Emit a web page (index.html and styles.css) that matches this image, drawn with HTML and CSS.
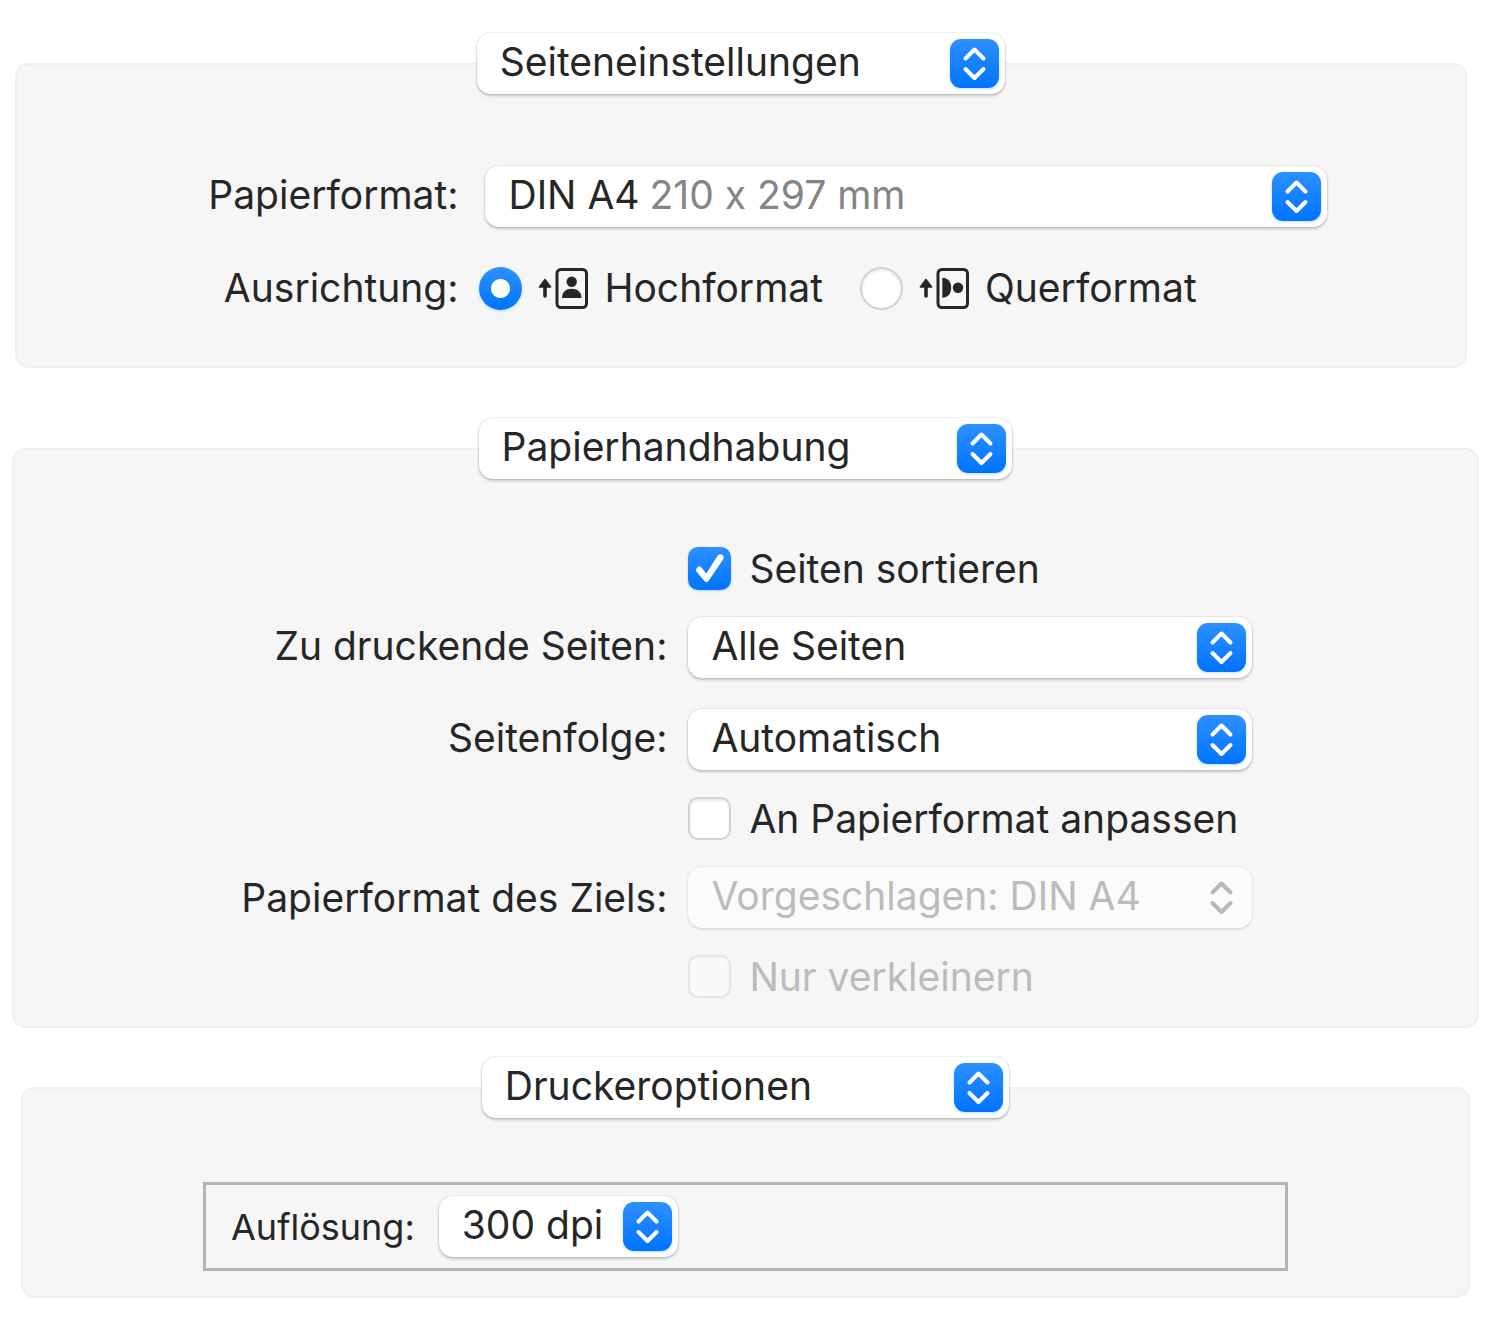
FILE: index.html
```html
<!DOCTYPE html>
<html lang="de">
<head>
<meta charset="utf-8">
<meta name="viewport" content="width=device-width, initial-scale=1">
<title>Drucken</title>
<link rel="stylesheet" href="styles.css">
</head>
<body>
<svg class="sprite" aria-hidden="true">
  <symbol id="chevrons" viewBox="0 0 49 49">
    <path d="M15.5 19.5 24.5 10.5 33.5 19.5M15.5 30 24.5 39 33.5 30" fill="none" stroke="currentColor" stroke-width="4" stroke-linecap="round" stroke-linejoin="round"/>
  </symbol>
  <symbol id="arrow-up" viewBox="0 0 14 44">
    <path d="M7 13.5 12.6 21H1.4Z" fill="currentColor" stroke="currentColor" stroke-width="1.5" stroke-linejoin="round"/>
    <path d="M7 20V30" stroke="currentColor" stroke-width="3.6" stroke-linecap="round"/>
  </symbol>
</svg>
<main class="page">
  <fieldset class="panel panel-setup">
    <legend class="panel-title">
      <span class="popup">
        <select aria-label="Bereich"><option>Seiteneinstellungen</option></select>
        <svg class="popup-arrows" aria-hidden="true"><use href="#chevrons"/></svg>
      </span>
    </legend>
    <div class="form form-setup">
      <label class="name" for="paper">Papierformat:</label>
      <span class="popup popup-paper">
        <select id="paper"><option>DIN A4</option></select>
        <span class="paper-size">210 x 297 mm</span>
        <svg class="popup-arrows" aria-hidden="true"><use href="#chevrons"/></svg>
      </span>
      <span class="name name-plain" id="orientation">Ausrichtung:</span>
      <div class="choices" role="radiogroup" aria-labelledby="orientation">
        <label class="choice">
          <input type="radio" name="orientation" checked>
          <svg class="orient" viewBox="0 0 50 44" aria-hidden="true">
            <use href="#arrow-up" width="14" height="44"/>
            <rect x="19" y="3.5" width="29.5" height="38" rx="4" fill="none" stroke="currentColor" stroke-width="3"/>
            <circle cx="33.7" cy="15.7" r="5.2" fill="currentColor"/>
            <path d="M24 32C24 26 28 22.7 33.7 22.7S43.5 26 43.5 32Z" fill="currentColor"/>
          </svg>
          Hochformat
        </label>
        <label class="choice">
          <input type="radio" name="orientation">
          <svg class="orient" viewBox="0 0 50 44" aria-hidden="true">
            <use href="#arrow-up" width="14" height="44"/>
            <rect x="19" y="3.5" width="29.5" height="38" rx="4" fill="none" stroke="currentColor" stroke-width="3"/>
            <circle cx="39" cy="21.7" r="5.2" fill="currentColor"/>
            <path d="M23.3 11.7C29 11.7 32.2 16 32.2 21.7S29 31.7 23.3 31.7Z" fill="currentColor"/>
          </svg>
          Querformat
        </label>
      </div>
    </div>
  </fieldset>

  <fieldset class="panel panel-handling">
    <legend class="panel-title">
      <span class="popup">
        <select aria-label="Bereich"><option>Papierhandhabung</option></select>
        <svg class="popup-arrows" aria-hidden="true"><use href="#chevrons"/></svg>
      </span>
    </legend>
    <div class="form form-handling">
      <label class="choice tick"><input type="checkbox" checked>Seiten sortieren</label>
      <label class="name" for="pages">Zu druckende Seiten:</label>
      <span class="popup">
        <select id="pages"><option>Alle Seiten</option></select>
        <svg class="popup-arrows" aria-hidden="true"><use href="#chevrons"/></svg>
      </span>
      <label class="name name-plain" for="order">Seitenfolge:</label>
      <span class="popup popup-order">
        <select id="order"><option>Automatisch</option></select>
        <svg class="popup-arrows" aria-hidden="true"><use href="#chevrons"/></svg>
      </span>
      <label class="choice tick"><input type="checkbox">An Papierformat anpassen</label>
      <label class="name name-plain" for="target">Papierformat des Ziels:</label>
      <span class="popup popup-disabled">
        <select id="target" disabled><option>Vorgeschlagen: DIN A4</option></select>
        <svg class="popup-arrows" aria-hidden="true"><use href="#chevrons"/></svg>
      </span>
      <label class="choice tick tick-disabled"><input type="checkbox" disabled>Nur verkleinern</label>
    </div>
  </fieldset>

  <fieldset class="panel panel-options">
    <legend class="panel-title">
      <span class="popup">
        <select aria-label="Bereich"><option>Druckeroptionen</option></select>
        <svg class="popup-arrows" aria-hidden="true"><use href="#chevrons"/></svg>
      </span>
    </legend>
    <div class="resolution">
      <label class="resolution-name" for="dpi">Auflösung:</label>
      <span class="popup popup-dpi">
        <select id="dpi"><option>300 dpi</option></select>
        <svg class="popup-arrows" aria-hidden="true"><use href="#chevrons"/></svg>
      </span>
    </div>
  </fieldset>
</main>
</body>
</html>
```
FILE: styles.css
```css
* {
  box-sizing: border-box;
}

body {
  margin: 0;
  background: #fff;
  color: #262626;
  font: 39px/42px Inter, "Liberation Sans", sans-serif;
  font-feature-settings: "calt" 0;
}

.sprite {
  display: none;
}

.page {
  padding: 33px 0 19px;
}

/* Panels */
.panel {
  min-width: 0;
  margin: 0;
  padding: 0;
  border: 2px solid #f0f0f0;
  border-radius: 14px;
  background: #f6f6f6;
}

.panel-setup {
  margin: 0 33px 50px 15px;
}

.panel-handling {
  margin: 0 21px 29px 12px;
}

.panel-options {
  margin: 0 30px 0 21px;
}

.panel-title {
  width: 36.5%;
  margin: 0 auto;
  padding: 0;
}

/* Pop-up buttons: the parts share one grid cell */
.popup {
  display: grid;
  align-items: center;
  height: 61px;
}

.popup > * {
  grid-area: 1 / 1;
}

.popup select {
  width: 100%;
  height: 61px;
  margin: 0;
  padding: 0 60px 3px 23px;
  appearance: none;
  border: 0;
  border-radius: 14px;
  background: #fff;
  box-shadow: 0 0 2px rgba(0, 0, 0, 0.2), 0 2px 3px rgba(0, 0, 0, 0.2);
  color: inherit;
  font: inherit;
  line-height: 58px;
}

.popup-arrows {
  justify-self: end;
  width: 49px;
  height: 49px;
  margin-right: 6px;
  border-radius: 11px;
  background: linear-gradient(#2d90ff, #0074ff);
  box-shadow: 0 1px 3px rgba(0, 116, 255, 0.25);
  color: #fff;
  pointer-events: none;
}

.popup-disabled select {
  background: #fbfbfb;
  box-shadow: 0 0 2px rgba(0, 0, 0, 0.12), 0 2px 3px rgba(0, 0, 0, 0.08);
  color: #bbb;
  opacity: 1;
}

.popup-disabled .popup-arrows {
  background: none;
  box-shadow: none;
  color: #b8b8b8;
}

.popup-paper {
  margin-left: 6px;
}

.paper-size {
  padding: 0 0 3px 164px;
  color: #858585;
  pointer-events: none;
}

.popup-order {
  margin-top: 4px;
}

.popup-dpi {
  width: 239px;
}

/* Forms */
.form {
  display: grid;
  align-items: center;
  column-gap: 21px;
}

.form-setup {
  grid-template-columns: 441fr 847fr;
  row-gap: 39px;
  padding: 72px 9.5% 56px 0;
}

.form-handling {
  grid-template-columns: 653fr 563fr;
  row-gap: 27px;
  padding: 68px 15.4% 28px 0;
}

.name {
  padding-bottom: 4px;
  text-align: right;
  white-space: nowrap;
}

.name-plain {
  padding-bottom: 0;
}

.choices {
  display: flex;
  gap: 37px;
}

.choice {
  display: flex;
  align-items: center;
  gap: 16px;
  white-space: nowrap;
}

.tick {
  grid-column: 2;
  gap: 18px;
}

.tick-disabled {
  color: #bbb;
}

.choice input {
  flex: none;
  width: 43px;
  height: 43px;
  margin: 0;
  appearance: none;
  border: 2px solid #d2d2d2;
  border-radius: 10px;
  background: #fff;
  box-shadow: inset 0 2px 3px rgba(0, 0, 0, 0.08);
}

.choice input[type="radio"] {
  border-radius: 50%;
}

.choice input:checked {
  border: 0;
  background: linear-gradient(#2d90ff, #0074ff);
  box-shadow: 0 1px 3px rgba(0, 116, 255, 0.25);
}

.choice input[type="radio"]:checked {
  background: radial-gradient(circle, #fff 9px, transparent 10px), linear-gradient(#2d90ff, #0074ff);
}

.choice input[type="checkbox"]:checked {
  display: grid;
  place-items: center;
}

.choice input[type="checkbox"]:checked::before {
  content: "";
  width: 29px;
  height: 29px;
  background: #fff;
  clip-path: path("M2.5 13Q-0.5 15.500 1.500 18L9 27Q11.500 29.500 13.500 26.500L28 5Q29 2 26.500 0.500Q23.500 -0.500 22 2L11 19.500L6 13.500Q4.500 11.500 2.500 13Z");
}

.choice input:disabled {
  border-color: #e4e4e4;
  background: #fafafa;
  box-shadow: inset 0 2px 3px rgba(0, 0, 0, 0.03);
}

.orient {
  flex: none;
  width: 50px;
  height: 44px;
}

/* Resolution box */
.resolution {
  display: flex;
  align-items: center;
  gap: 24px;
  margin: 64px 180px 25px;
  padding: 11px 25px;
  border: 3px solid #b5b5b5;
}

.resolution-name {
  font-size: 36px;
}
```
